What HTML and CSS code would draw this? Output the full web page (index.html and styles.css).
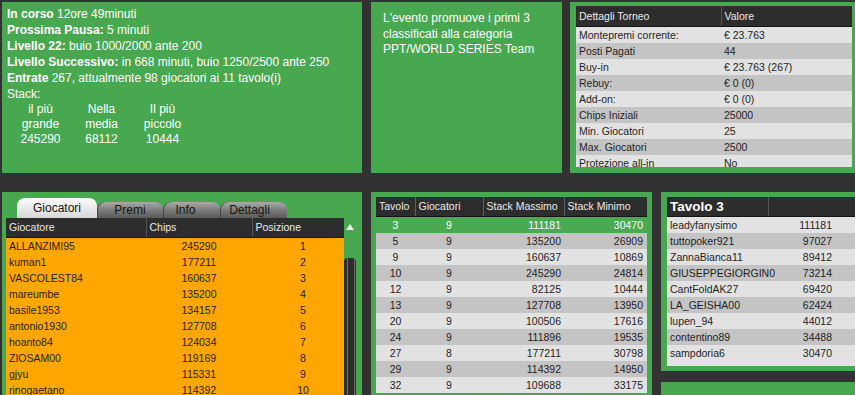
FILE: index.html
```html
<!doctype html>
<html lang="it">

<head>
    <meta charset="utf-8">
    <title>Torneo</title>
    <link rel="stylesheet" href="styles.css">
</head>

<body>
    <div class="top-row">
        <div class="panel panel-info">
            <div><b>In corso</b> 12ore 49minuti</div>
            <div><b>Prossima Pausa:</b> 5 minuti</div>
            <div><b>Livello 22:</b> buio 1000/2000 ante 200</div>
            <div><b>Livello Successivo:</b> in 668 minuti, buio 1250/2500 ante 250</div>
            <div><b>Entrate</b> 267, attualmente 98 giocatori ai 11 tavolo(i)</div>
            <div>Stack:</div>
            <div class="stack-grid">
                <div>il più<br>grande<br>245290</div>
                <div>Nella<br>media<br>68112</div>
                <div>Il più<br>piccolo<br>10444</div>
            </div>
        </div>
        <div class="panel panel-promo">
            L'evento promuove i primi 3 classificati alla categoria PPT/WORLD SERIES Team
        </div>
        <div class="panel panel-details">
            <div class="details-clip">
                <table class="grid grid-details">
                    <tr><th class="c-key">Dettagli Torneo</th><th>Valore</th></tr>
                    <tr><td>Montepremi corrente:</td><td>€ 23.763</td></tr>
                    <tr><td>Posti Pagati</td><td>44</td></tr>
                    <tr><td>Buy-in</td><td>€ 23.763 (267)</td></tr>
                    <tr><td>Rebuy:</td><td>€ 0 (0)</td></tr>
                    <tr><td>Add-on:</td><td>€ 0 (0)</td></tr>
                    <tr><td>Chips Iniziali</td><td>25000</td></tr>
                    <tr><td>Min. Giocatori</td><td>25</td></tr>
                    <tr><td>Max. Giocatori</td><td>2500</td></tr>
                    <tr><td>Protezione all-in</td><td>No</td></tr>
                </table>
            </div>
        </div>
    </div>

    <div class="bottom-row">
        <div class="panel panel-players">
            <div class="tabs">
                <div class="tab tab-active">Giocatori</div>
                <div class="tab tab-premi">Premi</div>
                <div class="tab tab-info">Info</div>
                <div class="tab tab-dettagli">Dettagli</div>
            </div>
            <div class="players-body">
                <table class="grid grid-players">
                    <tr><th class="c-name">Giocatore</th><th class="c-chips">Chips</th><th>Posizione</th></tr>
                    <tr><td>ALLANZIMI95</td><td>245290</td><td>1</td></tr>
                    <tr><td>kuman1</td><td>177211</td><td>2</td></tr>
                    <tr><td>VASCOLEST84</td><td>160637</td><td>3</td></tr>
                    <tr><td>mareumbe</td><td>135200</td><td>4</td></tr>
                    <tr><td>basile1953</td><td>134157</td><td>5</td></tr>
                    <tr><td>antonio1930</td><td>127708</td><td>6</td></tr>
                    <tr><td>hoanto84</td><td>124034</td><td>7</td></tr>
                    <tr><td>ZIOSAM00</td><td>119169</td><td>8</td></tr>
                    <tr><td>gjyu</td><td>115331</td><td>9</td></tr>
                    <tr><td>rinogaetano</td><td>114392</td><td>10</td></tr>
                </table>
                <div class="scrollbar">
                    <div class="scroll-up"><span class="arrow"></span></div>
                    <div class="scroll-thumb"></div>
                    <div class="scroll-track"></div>
                </div>
            </div>
        </div>

        <div class="panel panel-tables">
            <table class="grid grid-tables">
                <tr><th class="c-tav">Tavolo</th><th class="c-gioc">Giocatori</th><th class="c-max">Stack Massimo</th><th>Stack Minimo</th></tr>
                <tr class="row-selected"><td>3</td><td>9</td><td>111181</td><td>30470</td></tr>
                <tr><td>5</td><td>9</td><td>135200</td><td>26909</td></tr>
                <tr><td>9</td><td>9</td><td>160637</td><td>10869</td></tr>
                <tr><td>10</td><td>9</td><td>245290</td><td>24814</td></tr>
                <tr><td>12</td><td>9</td><td>82125</td><td>10444</td></tr>
                <tr><td>13</td><td>9</td><td>127708</td><td>13950</td></tr>
                <tr><td>20</td><td>9</td><td>100506</td><td>17616</td></tr>
                <tr><td>24</td><td>9</td><td>111896</td><td>19535</td></tr>
                <tr><td>27</td><td>8</td><td>177211</td><td>30798</td></tr>
                <tr><td>29</td><td>9</td><td>114392</td><td>14950</td></tr>
                <tr><td>32</td><td>9</td><td>109688</td><td>33175</td></tr>
            </table>
        </div>

        <div class="side-col">
            <div class="panel panel-seat">
                <div class="seat-box">
                    <table class="grid grid-seat">
                        <tr><th class="c-seat">Tavolo 3</th><th class="c-seat-chips"></th><th class="c-seat-end"></th></tr>
                        <tr><td>leadyfanysimo</td><td>111181</td><td></td></tr>
                        <tr><td>tuttopoker921</td><td>97027</td><td></td></tr>
                        <tr><td>ZannaBianca11</td><td>89412</td><td></td></tr>
                        <tr><td>GIUSEPPEGIORGIN0</td><td>73214</td><td></td></tr>
                        <tr><td>CantFoldAK27</td><td>69420</td><td></td></tr>
                        <tr><td>LA_GEISHA00</td><td>62424</td><td></td></tr>
                        <tr><td>lupen_94</td><td>44012</td><td></td></tr>
                        <tr><td>contentino89</td><td>34488</td><td></td></tr>
                        <tr><td>sampdoria6</td><td>30470</td><td></td></tr>
                    </table>
                </div>
            </div>
            <div class="panel panel-empty"></div>
        </div>
    </div>
</body>

</html>
```

FILE: styles.css
```css
html,
body {
    margin: 0;
    background-color: rgb(50, 50, 50);
}

body {
    width: 855px;
    height: 395px;
    overflow: hidden;
    font-family: "Liberation Sans", Arial, sans-serif;
    padding-top: 2px;
    box-sizing: border-box;
}

.panel {
    background-color: rgb(71, 168, 80);
    box-sizing: border-box;
}

/* riga superiore */
.top-row {
    display: flex;
    height: 171px;
    padding-left: 2px;
}

.panel-info {
    width: 360px;
    padding: 4px 5px;
    color: #fff;
    font-size: 12px;
    line-height: 16px;
}

.stack-grid {
    display: grid;
    grid-template-columns: 61px 61px 61px;
    margin-left: 3px;
    line-height: 15px;
    text-align: center;
}

.panel-promo {
    width: 191px;
    margin-left: 9px;
    padding: 9px 10px 0 12px;
    color: #fff;
    font-size: 12px;
    line-height: 15.5px;
}

.panel-details {
    width: 285px;
    margin-left: 8px;
    padding: 4px 3px 0 6px;
}

.details-clip {
    height: 161px;
    overflow: hidden;
}

/* tabelle */
.grid {
    border-collapse: collapse;
    table-layout: fixed;
    font-size: 10.5px;
    color: rgb(30, 30, 30);
}

.grid th {
    height: 19px;
    padding: 0 3px;
    background-color: rgb(45, 45, 45);
    color: rgb(235, 235, 235);
    font-weight: normal;
    text-align: left;
    border-bottom: 1px solid rgb(20, 20, 20);
    border-left: 1px solid rgb(85, 85, 85);
    box-sizing: border-box;
}

.grid th:first-child {
    border-left: none;
}

.grid td {
    height: 16px;
    padding: 0 3px;
    line-height: 16px;
    white-space: nowrap;
    overflow: hidden;
    background-color: rgb(226, 226, 226);
}

.grid tr:nth-child(odd) td {
    background-color: rgb(196, 196, 196);
}

.grid-details {
    width: 276px;
}

.grid-details th {
    height: 20px;
}

.c-key {
    width: 145px;
}

/* riga inferiore */
.bottom-row {
    display: flex;
    margin-top: 19px;
    padding-left: 2px;
    height: 210px;
}

.panel-players {
    width: 360px;
    padding: 6px 6px 0 4px;
}

.tabs {
    display: flex;
    align-items: flex-end;
    height: 20px;
    margin-left: 11px;
    font-size: 12px;
}

.tab {
    height: 16px;
    line-height: 16px;
    text-align: center;
    color: rgb(20, 20, 20);
    border-radius: 8px 8px 0 0;
    background: linear-gradient(rgb(170, 170, 170), rgb(120, 120, 120) 55%, rgb(90, 90, 90));
    box-shadow: inset 1px 0 0 rgb(70, 70, 70);
}

.tab-active {
    width: 80px;
    height: 20px;
    line-height: 20px;
    background: linear-gradient(rgb(252, 252, 252), rgb(215, 215, 215));
    box-shadow: none;
}

.tab-premi {
    width: 66px;
}

.tab-info {
    width: 57px;
    padding-right: 12px;
    box-sizing: border-box;
}

.tab-dettagli {
    width: 67px;
    padding-right: 8px;
    box-sizing: border-box;
}

.players-body {
    display: flex;
}

.grid-players {
    width: 338px;
}

.grid-players td,
.grid-players tr:nth-child(odd) td {
    background-color: rgb(255, 166, 0);
    color: rgb(40, 30, 10);
}

.grid-players td:nth-child(2) {
    text-align: center;
}

.grid-players td:nth-child(3) {
    text-align: center;
    padding-left: 13px;
}

.c-name {
    width: 140px;
}

.c-chips {
    width: 106px;
}

.scrollbar {
    width: 12px;
    display: flex;
    flex-direction: column;
}

.scroll-up {
    height: 17px;
    display: flex;
    justify-content: center;
    align-items: center;
}

.arrow {
    width: 0;
    height: 0;
    border-left: 4px solid transparent;
    border-right: 4px solid transparent;
    border-bottom: 6px solid rgb(235, 240, 235);
}

.scroll-thumb {
    height: 23px;
}

.scroll-track {
    flex: 1;
    border-radius: 4px 4px 0 0;
    background: linear-gradient(to right, rgb(45, 45, 45) 3px, rgb(110, 110, 110) 3px 4px, rgb(45, 45, 45) 4px 10px, rgb(110, 110, 110) 10px 11px, rgb(45, 45, 45) 11px);
}

.panel-tables {
    width: 281px;
    margin-left: 9px;
    padding: 5px 5px 0 5px;
}

.grid-tables {
    width: 271px;
}

.grid-tables th {
    height: 19px;
    border-left: 1px solid rgb(95, 95, 95);
}

.grid-tables td:nth-child(1),
.grid-tables td:nth-child(2) {
    text-align: center;
}

.grid-tables td:nth-child(3),
.grid-tables td:nth-child(4) {
    text-align: right;
}

.grid-tables td:nth-child(4) {
    padding-right: 4px;
}

.grid-tables tr.row-selected td {
    background-color: rgb(74, 170, 82);
    color: #fff;
}

.c-tav {
    width: 39px;
}

.c-gioc {
    width: 68px;
}

.c-max {
    width: 81px;
}

.side-col {
    display: flex;
    flex-direction: column;
    margin-left: 9px;
    width: 230px;
}

.panel-seat {
    height: 179px;
    padding: 5px 0 5px 6px;
}

.seat-box {
    height: 169px;
    background-color: rgb(226, 226, 226);
}

.grid-seat {
    width: 224px;
}

.grid-seat th {
    height: 19px;
    font-size: 13.5px;
    font-weight: bold;
    color: #fff;
}

.grid-seat th.c-seat-end {
    border-left: none;
}

.grid-seat td:first-child {
    padding-right: 0;
    overflow: visible;
}

.grid-seat td:nth-child(2) {
    text-align: right;
}

.c-seat {
    width: 101px;
}

.c-seat-chips {
    width: 67px;
}

.panel-empty {
    flex: 1;
    margin-top: 11px;
}
```
